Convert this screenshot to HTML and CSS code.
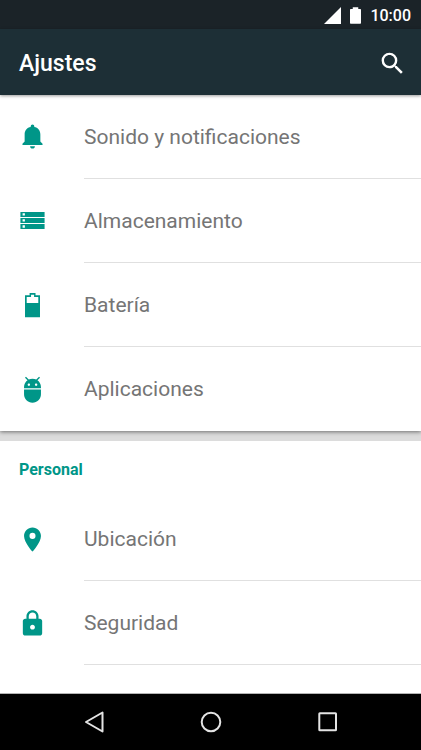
FILE: index.html
```html
<!DOCTYPE html>
<html lang="es">
<head>
<meta charset="utf-8">
<meta name="viewport" content="width=device-width, initial-scale=1">
<title>Ajustes</title>
<link rel="stylesheet" href="styles.css">
</head>
<body>
<div class="status">
  <svg class="signal" viewBox="0 0 18 18" aria-hidden="true"><path d="M18 0v18H0z"/></svg>
  <svg class="charge" viewBox="0 0 12 18" aria-hidden="true"><path d="M3 0h6v2h2.200q.8 0 .8.800V17.200q0 .8-.8.800H.8Q0 18 0 17.200V2.800Q0 2 .8 2H3z"/></svg>
  <time>10:00</time>
</div>
<header class="appbar">
  <h1>Ajustes</h1>
  <button class="search" type="button" aria-label="Buscar">
    <svg viewBox="0 0 24 24"><path d="M15.500 14h-.79l-.28-.27A6.470 6.470 0 0 0 16 9.500 6.500 6.500 0 1 0 9.500 16c1.610 0 3.090-.59 4.230-1.570l.27.280v.79l5 4.990L20.490 19l-4.990-5zm-6 0C7.010 14 5 11.990 5 9.500S7.010 5 9.500 5 14 7.010 14 9.500 11.990 14 9.500 14z"/></svg>
  </button>
</header>
<main class="content">
  <section class="group">
    <ul>
      <li><a class="row" href="#sonido">
        <svg viewBox="0 0 24 24"><path d="M12 21.200c1.200 0 2-.7 2-1.900h-4c0 1.200.8 1.900 2 1.900zM18.500 15.300V9.500c0-3.300-2-5.700-5-6.200v-.6a1.500 1.500 0 0 0-3 0v.6c-3 .5-5 2.900-5 6.200v5.800l-1.800 1.800v1.200h16.600v-1.200z"/></svg>
        <span>Sonido y notificaciones</span></a></li>
      <li><a class="row" href="#almacenamiento">
        <svg viewBox="0 0 24 24"><path fill-rule="evenodd" d="M2 4.100h20v4.100H2zM3.800 5.200v1.900h1.900V5.200zM2 9.100h20v4.100H2zM3.800 10.200v1.900h1.900v-1.900zM2 14.100h20v4.100H2zM3.800 15.200v1.900h1.900v-1.900z"/></svg>
        <span>Almacenamiento</span></a></li>
      <li><a class="row" href="#bateria">
        <svg viewBox="0 0 24 24"><path fill-rule="evenodd" d="M9.600 1.700h4.900v1.900H18.200v18.200H5.800V3.600h3.800zm1.200 1.400v1.900H7.200v5h9.600V5h-3.500V3.100z"/></svg>
        <span>Batería</span></a></li>
      <li><a class="row" href="#aplicaciones">
        <svg viewBox="0 0 24 24"><path d="M5 16c0 3.870 3.130 7 7 7s7-3.130 7-7v-4H5v4zM16.120 4.370l2.100-2.100-.82-.83-2.300 2.310C14.160 3.280 13.120 3 12 3s-2.160.28-3.090.750L6.600 1.440l-.82.83 2.100 2.100C6.140 5.640 5 7.680 5 10v1h14v-1c0-2.320-1.140-4.360-2.880-5.630zM9 9c-.55 0-1-.45-1-1s.45-1 1-1 1 .45 1 1-.45 1-1 1zm6 0c-.55 0-1-.45-1-1s.45-1 1-1 1 .45 1 1-.45 1-1 1z"/></svg>
        <span>Aplicaciones</span></a></li>
    </ul>
  </section>
  <section class="group">
    <h2>Personal</h2>
    <ul>
      <li><a class="row" href="#ubicacion">
        <svg viewBox="0 0 24 24"><path d="M12 2C8.130 2 5 5.130 5 9c0 5.250 7 13 7 13s7-7.750 7-13c0-3.870-3.130-7-7-7zm0 9.500a2.500 2.500 0 1 1 0-5 2.500 2.500 0 0 1 0 5z"/></svg>
        <span>Ubicación</span></a></li>
      <li><a class="row" href="#seguridad">
        <svg viewBox="0 0 24 24"><path d="M18 8h-1V6c0-2.760-2.240-5-5-5S7 3.240 7 6v2H6c-1.100 0-2 .9-2 2v10c0 1.100.9 2 2 2h12c1.100 0 2-.9 2-2V10c0-1.100-.9-2-2-2zm-6 9c-1.100 0-2-.9-2-2s.9-2 2-2 2 .9 2 2-.9 2-2 2zm3.100-9H8.900V6c0-1.710 1.390-3.100 3.100-3.100s3.100 1.390 3.100 3.100v2z"/></svg>
        <span>Seguridad</span></a></li>
    </ul>
  </section>
</main>
<nav class="navbar">
  <button type="button" aria-label="Atrás"><svg viewBox="0 0 24 24"><path d="M20.500 2.500v19L4 12z"/></svg></button>
  <button type="button" aria-label="Inicio"><svg viewBox="0 0 24 24"><circle cx="12" cy="12" r="9.300"/></svg></button>
  <button type="button" aria-label="Recientes"><svg viewBox="0 0 24 24"><rect x="3.300" y="3.300" width="16.700" height="17" rx=".5"/></svg></button>
</nav>
</body>
</html>
```
FILE: styles.css
```css
* { box-sizing: border-box; }

body {
  margin: 0;
  height: 100vh;
  display: flex;
  flex-direction: column;
  overflow: hidden;
  background: #fff;
  font-family: Roboto, "Liberation Sans", sans-serif;
}

h1, h2, ul { margin: 0; padding: 0; }
ul { list-style: none; }
svg { display: block; flex: none; }
button { border: 0; padding: 0; background: none; }

.status {
  flex: none;
  height: 29px;
  padding: 2px 10px 0;
  display: flex;
  align-items: center;
  justify-content: flex-end;
  gap: 9px;
  background: #1b2328;
  color: #fff;
  font-size: 16px;
  font-weight: 500;
  line-height: 20px;
}
.status svg { fill: #fff; height: 17px; }
.signal { width: 17px; }
.charge { width: 11px; }

.appbar {
  flex: none;
  height: 66px;
  padding: 2px 14px 0 19px;
  display: flex;
  align-items: center;
  justify-content: space-between;
  background: #1d2f36;
  color: #fff;
  box-shadow: 0 1px 3px rgba(0, 0, 0, .4);
  z-index: 1;
}
.appbar h1 {
  padding-top: 2px;
  font-size: 23px;
  font-weight: 500;
  line-height: 32px;
}
.search svg { width: 29px; height: 29px; fill: #fff; }

.content {
  flex: 1;
  min-height: 0;
  overflow: hidden;
  display: flex;
  flex-direction: column;
  gap: 10px;
  background: #dcdcdc;
}
.group {
  flex: none;
  background: #fff;
  box-shadow: 0 1px 4px rgba(0, 0, 0, .5);
}
.group:last-child {
  flex: 1 0 auto;
  box-shadow: none;
}
.group h2 {
  height: 56px;
  padding: 19px 19px 0;
  color: #009688;
  font-size: 16px;
  font-weight: 700;
  line-height: 20px;
}
.row {
  height: 84px;
  padding-left: 18px;
  display: flex;
  align-items: center;
  gap: 37px;
  color: #757575;
  font-size: 21px;
  line-height: 28px;
  text-decoration: none;
}
.row svg { width: 29px; height: 29px; fill: #009688; }
.row span {
  flex: 1;
  height: 100%;
  display: flex;
  align-items: center;
  border-bottom: 1px solid #e0e0e0;
}
.group:first-child li:last-child span { border-bottom-color: transparent; }

.navbar {
  flex: none;
  height: 57px;
  padding: 0 35px;
  display: flex;
  align-items: center;
  background: #000;
  border-top: 1px solid #b4b4b4;
}
.navbar button {
  flex: 1;
  display: flex;
  justify-content: center;
}
.navbar svg {
  width: 24px;
  height: 24px;
  fill: none;
  stroke: #e4e4e4;
  stroke-width: 2;
  stroke-linejoin: round;
}
```
